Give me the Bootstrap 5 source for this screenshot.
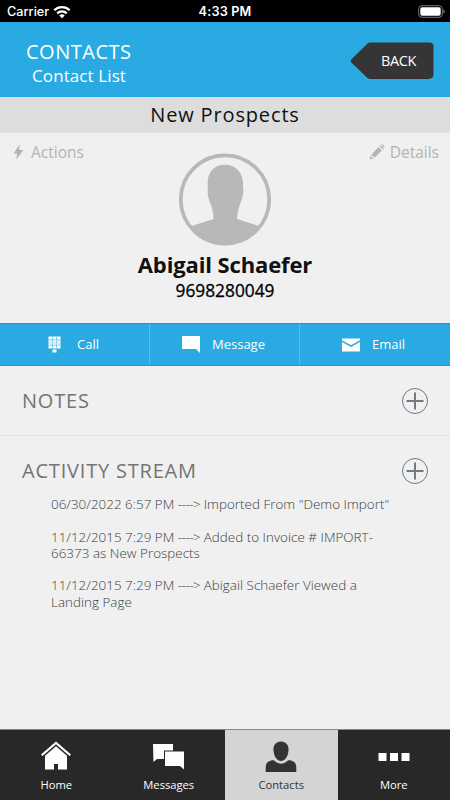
<!DOCTYPE html>
<html lang="en">
<head>
<meta charset="utf-8">
<meta name="viewport" content="width=device-width, initial-scale=1">
<title>Contacts</title>
<link href="https://cdn.jsdelivr.net/npm/bootstrap@5.3.0/dist/css/bootstrap.min.css" rel="stylesheet">
<style>
body{font-family:"Open Sans","Noto Sans",sans-serif;background:#f0f0f0;color:#111;height:800px;overflow:hidden}
svg{display:block;flex:none}
.status{height:22px;background:#000;color:#fff;font:500 12.7px/22px Inter,sans-serif;padding:1px 5px 0 7px}
.status .side{flex:1 1 0}
.clock{letter-spacing:.15px;margin-right:2px}
.head{height:75px;background:#29aae2;color:#fff;padding:0 16px 0 26px}
.head h1{font-size:20px;line-height:25px;font-weight:400;letter-spacing:.5px;padding-top:6px}
.head h2{font-size:17px;line-height:23px;font-weight:400;padding-left:6px;letter-spacing:.1px}
.back{width:84px;height:38px;font-size:14.5px;color:#fff;margin-top:2px}
.back:hover{color:#fff}
.back svg{position:absolute;left:0;top:0}
.back span{padding-left:13px;letter-spacing:-.35px;z-index:1}
.group-title{height:36px;background:#ddd;border-bottom:1px solid #e3e3e3;font-size:20px;line-height:36px;letter-spacing:.85px}
.profile{height:190px;padding:0 11px}
.tool{font-size:15.5px;line-height:22px;margin-top:8px;color:#b3b3b3;width:90px}
.tool span{padding-left:5px}
.who{font-size:22px;line-height:28px;font-weight:700;letter-spacing:-.12px}
.phone{font-size:17.3px;line-height:26px;color:#000;-webkit-text-stroke:.3px #000}
.acts{height:43px;background:#29aae2;border-top:1px solid #0d9ee0;border-bottom:1px solid #0d9ee0;font-size:13px}
.acts a{color:#fff;padding-right:2px}
.acts a+a{border-left:1px solid #58bde9}
.acts a:last-child{padding-right:3px}
.sec{height:70px;padding:0 22px}
.sec h3{font-size:20px;line-height:28px;font-weight:400;color:#747474;letter-spacing:.8px}
.sec svg{color:#707982}
.feed{padding:0 50px 0 51px;margin-top:-10px;font-size:13.4px;line-height:16.3px;font-weight:300;color:#3c3c3c;letter-spacing:.03px}
.feed i{font-style:normal;letter-spacing:-.5px}
.feed p{margin-bottom:16.3px}
.tabs{height:71px;background:#282828;border-top:1px solid #888;font-size:11.2px}
.tabs a{color:#fff;padding-top:10px;line-height:18px}
.tabs a.on{background:#d4d4d4;color:#333}
</style>
<script src="https://cdn.jsdelivr.net/npm/bootstrap@5.3.0/dist/js/bootstrap.bundle.min.js"></script>
</head>
<body class="d-flex flex-column">
<div class="status d-flex align-items-center">
  <div class="side d-flex align-items-center"><span>Carrier</span>
    <svg class="ms-1" width="18" height="14" viewBox="0 0 18 14" fill="none" stroke="#fff" stroke-width="2.3"><path d="M1.3 5.2a11 11 0 0 1 15.4 0M4.2 8.4a6.8 6.8 0 0 1 9.6 0"/><path d="M9 13.3 6.3 10.4a4 4 0 0 1 5.4 0z" fill="#fff" stroke="none"/></svg>
  </div>
  <b class="clock fw-semibold">4:33 PM</b>
  <div class="side d-flex justify-content-end">
    <svg width="27" height="13" viewBox="0 0 27 13"><rect x=".7" y=".7" width="23.6" height="11.6" rx="3.2" fill="none" stroke="#777"/><rect x="2.3" y="2.2" width="20.4" height="8.6" rx="1.8" fill="#fff"/><path d="M25.3 4.5q1.5.4 1.5 2t-1.5 2z" fill="#777"/></svg>
  </div>
</div>
<header class="head d-flex justify-content-between align-items-center">
  <div><h1 class="m-0">CONTACTS</h1><h2 class="m-0">Contact List</h2></div>
  <a href="#" class="back position-relative d-flex align-items-center justify-content-center text-decoration-none">
    <svg width="84" height="38" viewBox="0 0 84 38"><path d="M1 17.7 17 2q1.5-1.4 3.5-1.4H79.5q4 0 4 4V32.5q0 4-4 4H20.5q-2 0-3.5-1.4L1 19.5q-1-1 0-1.8z" fill="#353535"/><path d="M1 19.5 17 35.1q1.5 1.4 3.5 1.4H79.5" fill="none" stroke="#3a1518" stroke-width=".8"/></svg>
    <span>BACK</span>
  </a>
</header>
<div class="group-title text-center">New Prospects</div>
<section class="profile d-flex flex-column align-items-center">
  <div class="d-flex w-100 justify-content-between align-items-start">
    <a href="#" class="tool d-flex align-items-center text-decoration-none">
      <svg width="15" height="16" viewBox="0 0 15 16" fill="#b3b3b3"><path d="M8.7.5 2.5 9.4H6.2L5.2 15.5 12.5 5.9H8.3z"/></svg><span>Actions</span></a>
    <svg width="92" height="113" viewBox="0 0 92 113">
      <clipPath id="disc"><circle cx="46" cy="66.5" r="45"/></clipPath>
      <path clip-path="url(#disc)" d="M29 54C27 41 34 31.800 46 31.800S65 41 64 54c1 5 0 10-3 17-1 5-3 9-3 15l28 9v25H0V97l34.500-11c0-6-1-9-2.500-14-3-6-4-13-3-18z" fill="#b9b8b7"/>
      <circle cx="46" cy="66.5" r="44.2" fill="none" stroke="#b9b8b7" stroke-width="3.7"/></svg>
    <a href="#" class="tool d-flex align-items-center justify-content-end text-decoration-none">
      <svg width="16" height="16" viewBox="0 0 16 16" fill="#b3b3b3"><path d="M.8 15.3 1.3 11.8 4.4 14.8zM2.3 10.7 9.400 3.200 12.800 6.500 5.500 13.800zM10.400 2.200 11.400 1.200 14.800 4.500 13.800 5.500zM12.300 1.100 13.300.200 15.800 2.700 14.900 3.600z"/></svg><span>Details</span></a>
  </div>
  <div class="who mt-1">Abigail Schaefer</div>
  <div class="phone">9698280049</div>
</section>
<nav class="acts d-flex">
  <a href="#" class="col d-flex align-items-center justify-content-center text-decoration-none">
    <svg width="13" height="17" viewBox="0 0 13 17"><path d="M.5.5h12v12H.5zM4.5 13.5h4v3h-4z" fill="#fff"/><path d="M4.5.5v12M8.5.5v12M.5 3.800h12M.5 9.200h12" stroke="#81caed" stroke-width="1"/><path d="M.5 5h12v3H.5z" fill="#aee0f4" fill-opacity=".5"/></svg><span class="ps-3">Call</span></a>
  <a href="#" class="col d-flex align-items-center justify-content-center text-decoration-none">
    <svg width="18" height="17" viewBox="0 0 18 17"><path d="M0 0h18v17l-4-4H0z" fill="#fff"/></svg><span class="ps-2 ms-1">Message</span></a>
  <a href="#" class="col d-flex align-items-center justify-content-center text-decoration-none">
    <svg width="18" height="14" viewBox="0 0 18 14" fill="#fff"><path d="M0 .5h18v1.800L9 7.300 0 2.300zM0 4l9 5 9-5v9.500H0z"/></svg><span class="ps-2 ms-1">Email</span></a>
</nav>
<section class="sec border-bottom d-flex align-items-center justify-content-between"><h3 class="m-0">NOTES</h3>
  <svg width="26" height="26" viewBox="0 0 26 26" fill="none" stroke="currentColor"><circle cx="13" cy="13" r="12.5"/><path d="M4.500 13h17M13 4.500v17" stroke-width="2"/></svg></section>
<section class="sec d-flex align-items-center justify-content-between"><h3 class="m-0">ACTIVITY STREAM</h3>
  <svg width="26" height="26" viewBox="0 0 26 26" fill="none" stroke="currentColor"><circle cx="13" cy="13" r="12.5"/><path d="M4.500 13h17M13 4.500v17" stroke-width="2"/></svg></section>
<div class="feed">
  <p>06/30/2022 6:57 PM <i>----&gt;</i> Imported From "Demo Import"</p>
  <p>11/12/2015 7:29 PM <i>----&gt;</i> Added to Invoice # IMPORT-<br>66373 as New Prospects</p>
  <p>11/12/2015 7:29 PM <i>----&gt;</i> Abigail Schaefer Viewed a<br>Landing Page</p>
</div>
<nav class="tabs d-flex mt-auto">
  <a href="#" class="col d-flex flex-column align-items-center text-decoration-none">
    <svg width="32" height="32" viewBox="0 0 32 32" fill="#fff"><path d="M16 1.500 31 14.500 29.500 16 16 4.300 2.500 16 1 14.500zM16 6.200 27 15.700V29.500H18V24h-4v5.500H5V15.700z"/></svg><span class="mt-1">Home</span></a>
  <a href="#" class="col d-flex flex-column align-items-center text-decoration-none">
    <svg width="32" height="32" viewBox="0 0 32 32" fill="#fff"><path d="M0 4h20v6.500h-9V19H4L.500 22z"/><path d="M12 11.500h19V29.500L27 26H12z"/></svg><span class="mt-1">Messages</span></a>
  <a href="#" class="on col d-flex flex-column align-items-center text-decoration-none">
    <svg width="32" height="32" viewBox="0 0 32 32" fill="#333"><path d="M16 1.500c5 0 8 3.500 7.500 9C23 17 19.500 21 16 21s-7-4-7.500-10.500c-.500-5.500 2.500-9 7.500-9z"/><path d="M.700 32V27q0-5.500 5.500-6.500c2-.500 3 0 4 1q5.800 4.500 11.600 0c1-1 2-1.500 4-1q5.500 1 5.500 6.500V32z"/></svg><span class="mt-1">Contacts</span></a>
  <a href="#" class="col d-flex flex-column align-items-center text-decoration-none">
    <svg width="32" height="32" viewBox="0 0 32 32" fill="#fff"><path d="M.500 13h8v8h-8zM12 13h8v8h-8zM23.500 13h8v8h-8z"/></svg><span class="mt-1">More</span></a>
</nav>
</body>
</html>
